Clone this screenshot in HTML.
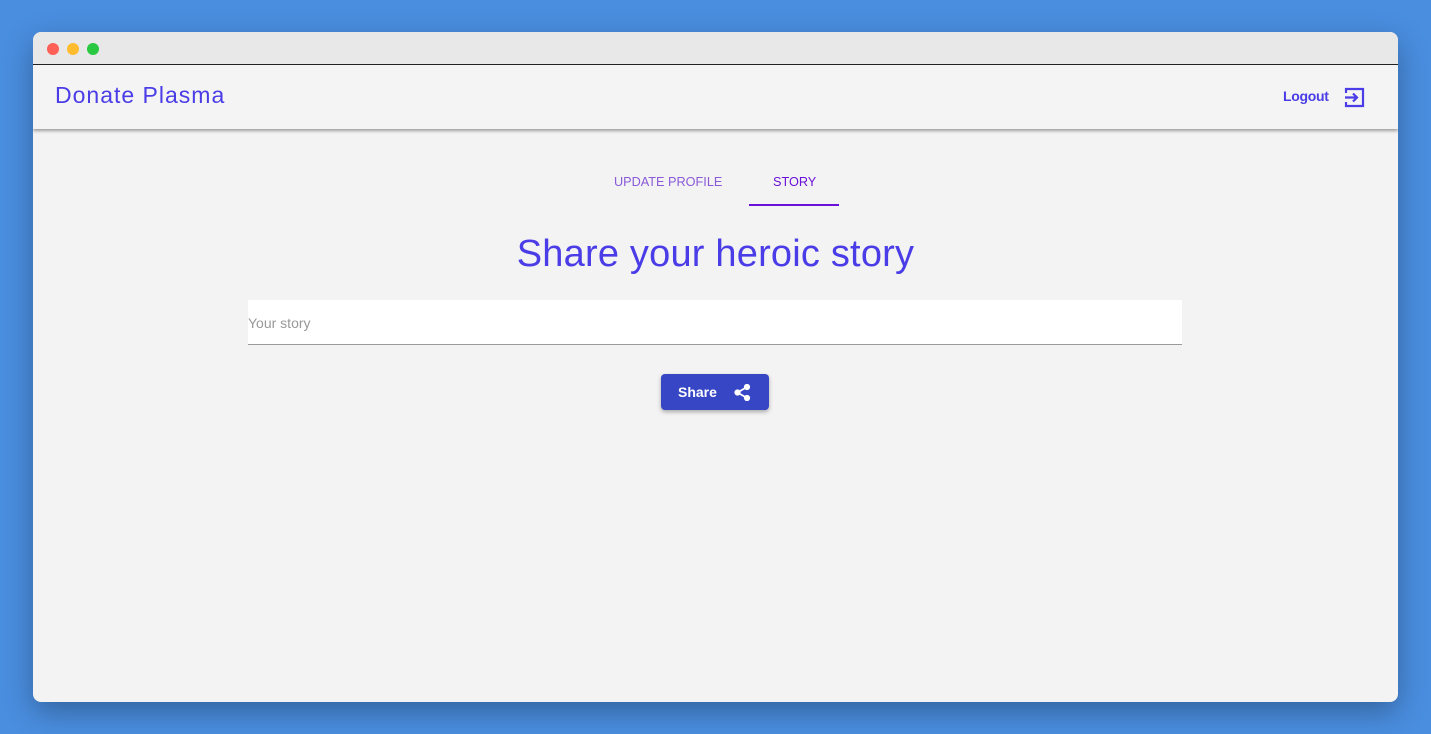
<!DOCTYPE html>
<html><head><style>
*{margin:0;padding:0;box-sizing:border-box}
body{width:1431px;height:734px;background:#4a8ee0;font-family:"Liberation Sans",sans-serif;position:relative;overflow:hidden}
.win{position:absolute;left:33px;top:32px;width:1365px;height:670px;background:#f3f3f3;border-radius:8px;overflow:hidden;box-shadow:0 10px 30px rgba(0,0,0,.3)}
.tb{height:33px;background:#e8e8e8;border-bottom:1px solid #222;position:relative}
.d{position:absolute;top:11px;width:12px;height:12px;border-radius:50%}
.hd{height:64px;background:#f4f4f4;box-shadow:0 2px 3px rgba(0,0,0,.35);position:relative}
.logo{position:absolute;left:22px;top:17px;font-size:23px;color:#4a3ce6;letter-spacing:1px}
.lo{position:absolute;left:1250px;top:23px;font-size:14px;color:#4a3ce6;font-weight:bold;letter-spacing:-.3px}
.tab{position:absolute;top:143px;font-size:12.7px}
h1{position:absolute;left:0;width:1365px;top:201px;text-align:center;font-weight:normal;font-size:38px;color:#4a3ce6;letter-spacing:.2px}
.in{position:absolute;left:215px;top:268px;width:934px;height:45px;background:#fff;border-bottom:1px solid #999;font-size:14px;color:#999;padding:15px 0 0 0}
.btn{position:absolute;left:628px;top:342px;width:108px;height:36px;background:#3646c4;border-radius:4px;box-shadow:0 2px 4px rgba(0,0,0,.3);color:#fff;font-weight:bold;font-size:14px;padding:10px 0 0 17px}
</style></head><body>
<div class="win">
<div class="tb"><div class="d" style="left:14px;background:#fe5f57"></div><div class="d" style="left:34px;background:#febc2e"></div><div class="d" style="left:54px;background:#28c840"></div></div>
<div class="hd"><div class="logo">Donate Plasma</div><div class="lo">Logout</div>
<svg style="position:absolute;left:1311px;top:22px" width="21" height="21" viewBox="0 0 21 21" fill="none" stroke="#4a3ce6" stroke-width="2.2"><path d="M2 6V2h17v17H2v-4"/><path d="M1 10.5h12M9 6.5l4 4-4 4"/></svg></div>
<div class="tab" style="left:581px;color:#8a5ad8">UPDATE PROFILE</div>
<div class="tab" style="left:740px;color:#6a10d8">STORY</div>
<div style="position:absolute;left:716px;top:172px;width:90px;height:2px;background:#6a10d8"></div>
<h1>Share your heroic story</h1>
<div class="in">Your story</div>
<div class="btn">Share<svg style="position:absolute;left:73px;top:10px" width="17" height="17" viewBox="0 0 17 17" fill="#fff" stroke="#fff" stroke-width="1.8"><circle cx="13" cy="3" r="2.2"/><circle cx="3.5" cy="8.5" r="2.2"/><circle cx="13" cy="14" r="2.2"/><path d="M13 3L3.5 8.5 13 14" fill="none"/></svg></div>
</div>
</body></html>
